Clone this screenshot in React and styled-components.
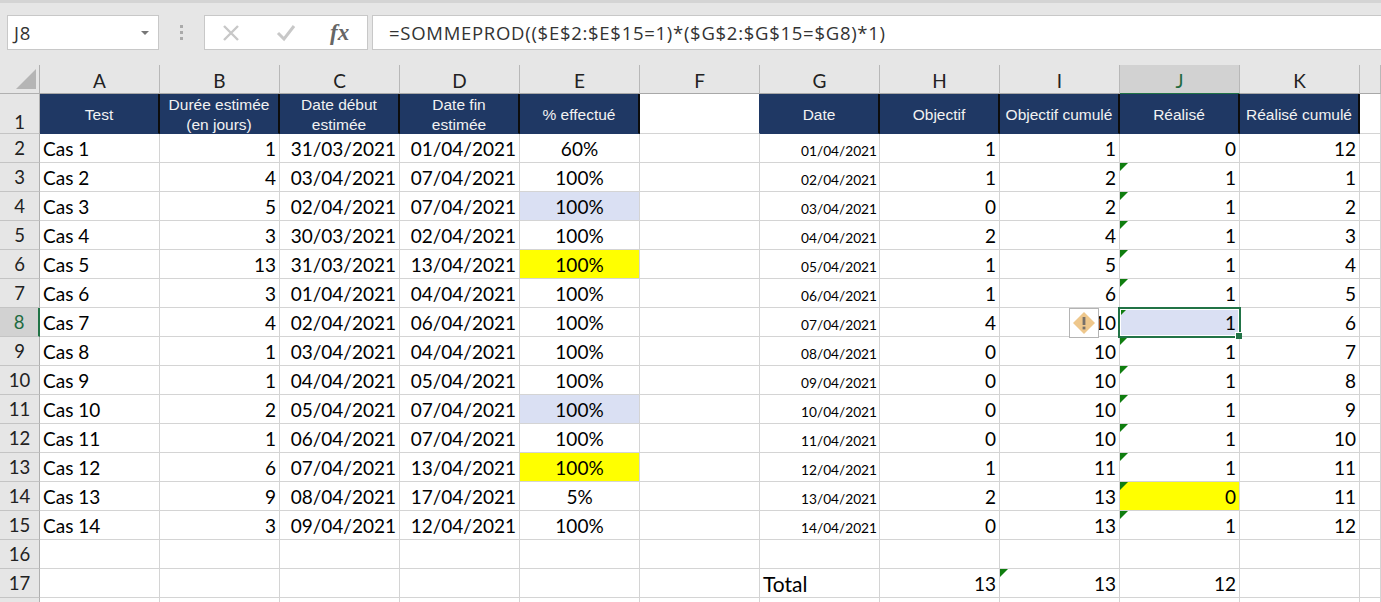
import React from "react";
import styled, { createGlobalStyle } from "styled-components";

const Global = createGlobalStyle`
  html, body { margin: 0; padding: 0; overflow: hidden; background: #fff; }
`;

const Page = styled.div`
  width: 1381px;
  height: 602px;
  overflow: hidden;
  background: #e6e6e6;
  font-family: "Lato", "Liberation Sans", sans-serif;
  color: #000;
`;

const TopEdge = styled.div`
  height: 3px;
  background: #d4d4d4;
`;

const Toolbar = styled.div`
  height: 62px;
  display: flex;
  align-items: flex-start;
  padding: 12px 0 0 7px;
  box-sizing: border-box;
`;

const Field = styled.div`
  height: 35px;
  box-sizing: border-box;
  background: #fff;
  border: 1px solid #c8c8c8;
  display: flex;
  align-items: center;
`;

const NameBox = styled(Field)`
  width: 152px;
  padding: 0 9px 0 6px;
  justify-content: space-between;
  font-family: "Open Sans", sans-serif;
  font-size: 18.5px;
  letter-spacing: 0.8px;
  color: #333;
`;

const Caret = styled.span`
  width: 0;
  height: 0;
  border-left: 4px solid transparent;
  border-right: 4px solid transparent;
  border-top: 4px solid #777;
`;

const Grip = styled.div`
  width: 45px;
  height: 35px;
  display: flex;
  flex-direction: column;
  align-items: center;
  justify-content: center;
  gap: 3px;
  padding-right: 1px;
  box-sizing: border-box;
  span { width: 3px; height: 3px; background: #aaa; }
`;

const FxBox = styled(Field)`
  width: 164px;
  margin-right: 4px;
  padding-left: 17px;
  gap: 36px;
`;

const FormulaBar = styled(Field)`
  flex: 1;
  border-right: none;
  padding-left: 16px;
  font-family: "Open Sans", sans-serif;
  font-size: 18.5px;
  letter-spacing: 0.72px;
  color: #333;
`;

const Sheet = styled.div`
  display: grid;
  grid-template-columns: 40px repeat(11, 120px) 21px;
  grid-template-rows: 29px 40px repeat(16, 29px) 5px;
  background: #fff;
`;

const Corner = styled.div`
  background: #e6e6e6;
  border-right: 1px solid #b0b0b0;
  border-bottom: 1px solid #b0b0b0;
  position: relative;
  &::after {
    content: "";
    position: absolute;
    right: 3px;
    bottom: 4px;
    border-style: solid;
    border-width: 0 0 20px 20px;
    border-color: transparent transparent #b5b5b5 transparent;
  }
`;

const ColHead = styled.div`
  background: ${(p) => (p.$active ? "#d2d2d2" : "#e6e6e6")};
  color: ${(p) => (p.$active ? "#1f6b41" : "#222")};
  border-right: 1px solid #b8b8b8;
  border-bottom: 1px solid ${(p) => (p.$active ? "#217346" : "#a8a8a8")};
  display: flex;
  align-items: center;
  justify-content: center;
  font-size: 19px;
  padding-top: 2px;
  box-sizing: border-box;
`;

const RowHead = styled.div`
  background: ${(p) => (p.$active ? "#d2d2d2" : "#e6e6e6")};
  color: ${(p) => (p.$active ? "#1f6b41" : "#222")};
  border-right: ${(p) => (p.$active ? "2px solid #217346" : "1px solid #b0b0b0")};
  border-bottom: 1px solid #c4c4c4;
  display: flex;
  align-items: flex-end;
  justify-content: center;
  font-size: 18.5px;
  line-height: ${(p) => (p.$tall ? "22px" : "27px")};
  box-sizing: border-box;
`;

const TitleCell = styled.div`
  background: #1f3864;
  color: #f2f2f2;
  border-right: 2px solid #0c0c0c;
  box-sizing: border-box;
  display: flex;
  align-items: center;
  justify-content: center;
  text-align: center;
  font-family: "Liberation Sans", sans-serif;
  font-size: 15.5px;
  line-height: 20px;
  padding-top: 2px;
  border-bottom: 1px solid #1f3864;
  white-space: pre-line;
`;

const Cell = styled.div`
  position: relative;
  box-sizing: border-box;
  background: ${(p) => p.$fill || "#fff"};
  border-right: 1px solid ${(p) => p.$edge || "#d4d4d4"};
  border-bottom: 1px solid #d4d4d4;
  display: flex;
  align-items: center;
  justify-content: ${(p) =>
    p.$align === "left" ? "flex-start" : p.$align === "center" ? "center" : "flex-end"};
  padding: ${(p) =>
    p.$small ? "4px 2px 0 3px" : p.$align === "left" ? "0 0 0 3px" : "0 3px 0 3px"};
  font-size: ${(p) => (p.$small ? "13.7px" : p.$large ? "21px" : "19px")};
  white-space: nowrap;
`;

const Flag = styled.span`
  position: absolute;
  left: 0;
  top: 0;
  border-style: solid;
  border-width: 8px 8px 0 0;
  border-color: #0f7d0f transparent transparent transparent;
`;

const Selection = styled.span`
  position: absolute;
  z-index: 2;
  left: -2px;
  top: -1px;
  right: -2px;
  bottom: -2px;
  border: 2px solid #217346;
  box-shadow: inset 0 0 0 1px #fff;
  pointer-events: none;
`;

const Handle = styled.span`
  position: absolute;
  right: -3px;
  bottom: -3px;
  width: 6px;
  height: 6px;
  background: #217346;
  border: 1px solid #fff;
  border-width: 1px 0 0 1px;
`;

const Warning = styled.span`
  position: absolute;
  z-index: 2;
  right: 20px;
  top: 0;
  width: 30px;
  height: 30px;
  box-sizing: border-box;
  background: #fff;
  border: 1px solid #b4b4b4;
  display: flex;
  align-items: center;
  justify-content: center;
`;

const FxText = styled.span`
  font-family: "Liberation Serif", serif;
  font-style: italic;
  font-weight: 700;
  font-size: 23px;
  color: #666;
  margin-left: -2px;
`;

const BLUE = "#dae0f3";
const YELLOW = "#ffff00";
const NAVY = "#1f3864";

const left = [
  ["Cas 1", 1, "31/03/2021", "01/04/2021", "60%"],
  ["Cas 2", 4, "03/04/2021", "07/04/2021", "100%"],
  ["Cas 3", 5, "02/04/2021", "07/04/2021", "100%", BLUE],
  ["Cas 4", 3, "30/03/2021", "02/04/2021", "100%"],
  ["Cas 5", 13, "31/03/2021", "13/04/2021", "100%", YELLOW],
  ["Cas 6", 3, "01/04/2021", "04/04/2021", "100%"],
  ["Cas 7", 4, "02/04/2021", "06/04/2021", "100%"],
  ["Cas 8", 1, "03/04/2021", "04/04/2021", "100%"],
  ["Cas 9", 1, "04/04/2021", "05/04/2021", "100%"],
  ["Cas 10", 2, "05/04/2021", "07/04/2021", "100%", BLUE],
  ["Cas 11", 1, "06/04/2021", "07/04/2021", "100%"],
  ["Cas 12", 6, "07/04/2021", "13/04/2021", "100%", YELLOW],
  ["Cas 13", 9, "08/04/2021", "17/04/2021", "5%"],
  ["Cas 14", 3, "09/04/2021", "12/04/2021", "100%"],
];

const right = [
  ["01/04/2021", 1, 1, 0, 12],
  ["02/04/2021", 1, 2, 1, 1],
  ["03/04/2021", 0, 2, 1, 2],
  ["04/04/2021", 2, 4, 1, 3],
  ["05/04/2021", 1, 5, 1, 4],
  ["06/04/2021", 1, 6, 1, 5],
  ["07/04/2021", 4, 10, 1, 6],
  ["08/04/2021", 0, 10, 1, 7],
  ["09/04/2021", 0, 10, 1, 8],
  ["10/04/2021", 0, 10, 1, 9],
  ["11/04/2021", 0, 10, 1, 10],
  ["12/04/2021", 1, 11, 1, 11],
  ["13/04/2021", 2, 13, 0, 11],
  ["14/04/2021", 0, 13, 1, 12],
];

const COLS = ["A", "B", "C", "D", "E", "F", "G", "H", "I", "J", "K", ""];
const LEFT_TITLES = ["Test", "Durée estimée\n(en jours)", "Date début\nestimée", "Date fin\nestimée", "% effectué"];
const RIGHT_TITLES = ["Date", "Objectif", "Objectif cumulé", "Réalisé", "Réalisé cumulé"];

function WarningIcon() {
  return (
    <svg width="22" height="22" viewBox="0 0 22 22">
      <path d="M11 0 L22 11 L11 22 L0 11 Z" fill="#eec78c" />
      <rect x="9.6" y="5" width="2.8" height="8" fill="#77706a" />
      <rect x="9.6" y="14.6" width="2.8" height="2.8" fill="#77706a" />
    </svg>
  );
}

function FxIcons() {
  return (
    <>
      <svg width="18" height="18" viewBox="0 0 18 18">
        <path d="M2 2 L16 16 M16 2 L2 16" stroke="#c8c8c8" strokeWidth="2.4" fill="none" />
      </svg>
      <svg width="20" height="18" viewBox="0 0 20 18">
        <path d="M2 9 L8 15 L18 2" stroke="#c8c8c8" strokeWidth="3" fill="none" />
      </svg>
      <FxText>fx</FxText>
    </>
  );
}

function Row({ index }) {
  const l = left[index];
  const r = right[index];
  const n = index + 2;
  const active = n === 8;
  const flagged = index > 0;
  return (
    <>
      <RowHead $active={active}>{n}</RowHead>
      <Cell $align="left">{l[0]}</Cell>
      <Cell>{l[1]}</Cell>
      <Cell>{l[2]}</Cell>
      <Cell>{l[3]}</Cell>
      <Cell $align="center" $fill={l[5]}>{l[4]}</Cell>
      <Cell />
      <Cell $small>{r[0]}</Cell>
      <Cell>{r[1]}</Cell>
      <Cell>
        {r[2]}
        {active && (
          <Warning>
            <WarningIcon />
          </Warning>
        )}
      </Cell>
      <Cell $fill={active ? BLUE : n === 14 ? YELLOW : undefined}>
        {flagged && <Flag />}
        {r[3]}
        {active && (
          <Selection>
            <Handle />
          </Selection>
        )}
      </Cell>
      <Cell>{r[4]}</Cell>
      <Cell />
    </>
  );
}

function EmptyCells({ count }) {
  return Array.from({ length: count }, (_, i) => <Cell key={i} />);
}

export default function App() {
  return (
    <Page>
      <Global />
      <TopEdge />
      <Toolbar>
        <NameBox>
          J8
          <Caret />
        </NameBox>
        <Grip>
          <span />
          <span />
          <span />
        </Grip>
        <FxBox>
          <FxIcons />
        </FxBox>
        <FormulaBar>=SOMMEPROD(($E$2:$E$15=1)*($G$2:$G$15=$G8)*1)</FormulaBar>
      </Toolbar>
      <Sheet>
        <Corner />
        {COLS.map((c, i) => (
          <ColHead key={i} $active={c === "J"}>{c}</ColHead>
        ))}
        <RowHead $tall>1</RowHead>
        {LEFT_TITLES.map((t) => (
          <TitleCell key={t}>
            <span>{t}</span>
          </TitleCell>
        ))}
        <Cell $edge={NAVY} />
        {RIGHT_TITLES.map((t) => (
          <TitleCell key={t}>{t}</TitleCell>
        ))}
        <Cell />
        {left.map((_, i) => (
          <Row key={i} index={i} />
        ))}
        <RowHead>16</RowHead>
        <EmptyCells count={12} />
        <RowHead>17</RowHead>
        <EmptyCells count={6} />
        <Cell $align="left" $large>Total</Cell>
        <Cell>13</Cell>
        <Cell>
          <Flag />
          13
        </Cell>
        <Cell>12</Cell>
        <EmptyCells count={2} />
        <RowHead />
        <EmptyCells count={12} />
      </Sheet>
    </Page>
  );
}
